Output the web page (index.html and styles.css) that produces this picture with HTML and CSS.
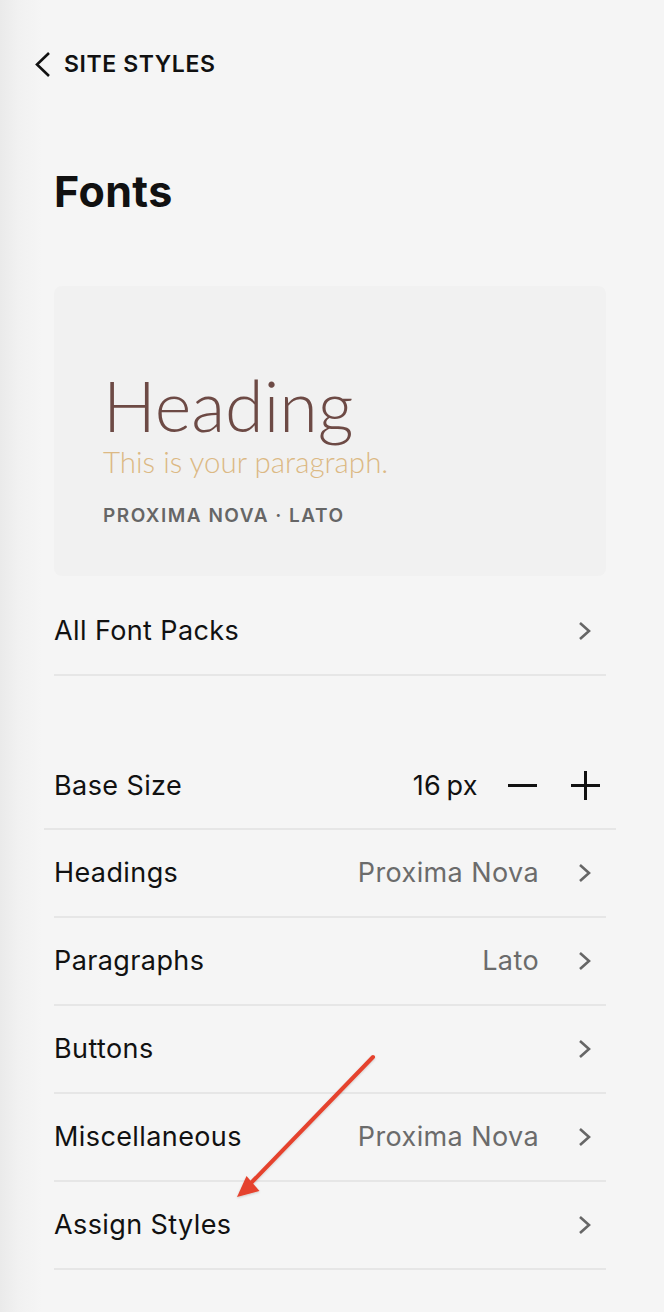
FILE: index.html
```html
<!DOCTYPE html>
<html lang="en">
<head>
<meta charset="utf-8">
<title>Fonts</title>
<link rel="stylesheet" href="styles.css">
</head>
<body>
<div class="page">
  <header class="top">
    <svg class="back" width="18" height="27" viewBox="0 0 18 27"><path d="M16 2 L4 13.5 L16 25" fill="none" stroke="#111" stroke-width="2.6"/></svg>
    <span class="top-label">SITE STYLES</span>
  </header>
  <main class="panel">
    <h1 class="title">Fonts</h1>
    <div class="preview">
      <div class="pv-heading">Heading</div>
      <div class="pv-para">This is your paragraph.</div>
      <div class="pv-label">PROXIMA NOVA · LATO</div>
    </div>
    <div class="row">
      <span class="row-label">All Font Packs</span>
      <svg class="chev" width="15" height="20" viewBox="0 0 15 20"><path d="M3 2 L12 10 L3 18" fill="none" stroke="#666" stroke-width="2.6"/></svg>
    </div>
    <div class="row base">
      <span class="row-label">Base Size</span>
      <div class="stepper">
        <span class="size">16&#8201;px</span>
        <svg class="step minus" width="29" height="29" viewBox="0 0 29 29"><path d="M0 14.5 H29" stroke="#111" stroke-width="3"/></svg>
        <svg class="step plus" width="29" height="29" viewBox="0 0 29 29"><path d="M0 14.5 H29 M14.5 0 V29" stroke="#111" stroke-width="3"/></svg>
      </div>
    </div>
    <div class="row">
      <span class="row-label">Headings</span>
      <span class="row-value">Proxima Nova</span>
      <svg class="chev" width="15" height="20" viewBox="0 0 15 20"><path d="M3 2 L12 10 L3 18" fill="none" stroke="#666" stroke-width="2.6"/></svg>
    </div>
    <div class="row">
      <span class="row-label">Paragraphs</span>
      <span class="row-value">Lato</span>
      <svg class="chev" width="15" height="20" viewBox="0 0 15 20"><path d="M3 2 L12 10 L3 18" fill="none" stroke="#666" stroke-width="2.6"/></svg>
    </div>
    <div class="row">
      <span class="row-label">Buttons</span>
      <svg class="chev" width="15" height="20" viewBox="0 0 15 20"><path d="M3 2 L12 10 L3 18" fill="none" stroke="#666" stroke-width="2.6"/></svg>
    </div>
    <div class="row">
      <span class="row-label">Miscellaneous</span>
      <span class="row-value">Proxima Nova</span>
      <svg class="chev" width="15" height="20" viewBox="0 0 15 20"><path d="M3 2 L12 10 L3 18" fill="none" stroke="#666" stroke-width="2.6"/></svg>
    </div>
    <div class="row">
      <span class="row-label">Assign Styles</span>
      <svg class="chev" width="15" height="20" viewBox="0 0 15 20"><path d="M3 2 L12 10 L3 18" fill="none" stroke="#666" stroke-width="2.6"/></svg>
    </div>
  </main>
  <svg class="annot" width="664" height="1312" viewBox="0 0 664 1312">
    <defs>
      <filter id="sh" x="-20%" y="-20%" width="140%" height="140%">
        <feDropShadow dx="0" dy="1" stdDeviation="1" flood-color="#000" flood-opacity="0.18"/>
      </filter>
    </defs>
    <g filter="url(#sh)">
      <path d="M373 1057 L251 1183" stroke="#e5432d" stroke-width="4" stroke-linecap="round"/>
      <polygon points="237,1197 246.5,1176 259.5,1191" fill="#e5432d"/>
    </g>
  </svg>
</div>
</body>
</html>
```

FILE: styles.css
```css
html, body {
  margin: 0;
  padding: 0;
}

body {
  background: linear-gradient(to right, #eaeaea 0, #f1f1f1 18px, #f5f5f5 42px);
  font-family: "Inter", "Liberation Sans", sans-serif;
  color: #111;
}

.page {
  position: relative;
  width: 664px;
  height: 1312px;
  overflow: hidden;
}

.top {
  display: flex;
  align-items: center;
  height: 48px;
  padding: 40px 0 0 33px;
}

.back {
  display: block;
  flex: none;
}

.top-label {
  margin-left: 13px;
  font-size: 23px;
  font-weight: 600;
  letter-spacing: 0.6px;
  color: #111;
}

.panel {
  padding: 0 58px 0 54px;
}

.title {
  margin: 78px 0 0 0;
  font-size: 43px;
  line-height: 1.2;
  font-weight: 700;
  letter-spacing: 0.4px;
  color: #111;
}

.preview {
  box-sizing: border-box;
  height: 290px;
  margin-top: 68px;
  padding: 77px 0 0 49px;
  background: #f1f1f1;
  border-radius: 8px;
}

.pv-heading {
  font-family: "Lato", sans-serif;
  font-weight: 300;
  font-size: 70px;
  line-height: 1.2;
  color: #6d4a45;
}

.pv-para {
  margin-top: -3px;
  font-family: "Lato", sans-serif;
  font-weight: 300;
  font-size: 29.5px;
  line-height: 1.2;
  color: #dcb984;
}

.pv-label {
  margin-top: 26px;
  font-size: 19px;
  line-height: 1.2;
  font-weight: 600;
  letter-spacing: 1.5px;
  color: #666;
}

.row {
  display: flex;
  align-items: center;
  height: 86px;
  border-bottom: 2px solid #e6e6e6;
  font-size: 27px;
  letter-spacing: 0.4px;
}

.preview + .row {
  margin-top: 12px;
}

.row-label {
  flex: 1;
  color: #111;
}

.row-value {
  color: #6b6b6b;
  margin-right: 38px;
}

.chev {
  display: block;
  flex: none;
  margin-right: 14px;
}

.row.base {
  margin: 66px -10px 0 -10px;
  padding: 2px 16px 0 10px;
  height: 84px;
}

.stepper {
  display: flex;
  align-items: center;
}

.size {
  color: #111;
  margin-right: 30px;
}

.step {
  display: block;
  flex: none;
}

.step.minus {
  margin-right: 34px;
}

.annot {
  position: absolute;
  top: 0;
  left: 0;
  pointer-events: none;
}
```
